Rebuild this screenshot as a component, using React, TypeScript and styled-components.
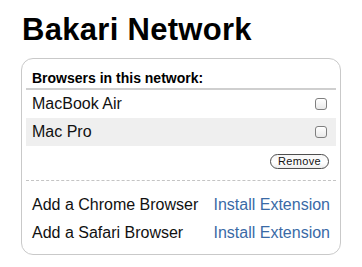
import React from 'react'
import styled, { createGlobalStyle } from 'styled-components'

const GlobalStyle = createGlobalStyle`
  html, body {
    margin: 0;
    padding: 0;
    background: #fff;
  }
  body {
    font-family: "Liberation Sans", Arial, Helvetica, sans-serif;
    color: #111;
  }
`

const Page = styled.main`
  padding: 14px 22px 0 21px;
  width: 320px;
`

const Title = styled.h1`
  margin: 0 0 12px 1px;
  font-size: 31px;
  line-height: 32px;
  font-weight: bold;
  letter-spacing: 0.3px;
  color: #000;
`

const Card = styled.section`
  border: 1px solid #c9c9c9;
  border-radius: 12px;
  padding: 0 4px 7px;
`

const Header = styled.h2`
  margin: 0;
  padding: 11px 6px 1px;
  font-size: 14px;
  line-height: 17px;
  font-weight: bold;
  color: #000;
  border-bottom: 2px solid #cfcfcf;
`

const Row = styled.div<{ $shaded?: boolean }>`
  display: flex;
  align-items: center;
  justify-content: space-between;
  height: 28px;
  padding: 0 9px 0 6px;
  font-size: 16px;
  line-height: 28px;
  background: ${({ $shaded }) => ($shaded ? '#efefef' : 'transparent')};
`

const Check = styled.span`
  display: block;
  width: 10px;
  height: 10px;
  border: 1px solid #7f7f7f;
  border-radius: 3px;
  background: linear-gradient(#ffffff, #e9e9e9);
  box-shadow: inset 0 1px 0 #fff;
`

const Actions = styled.div`
  display: flex;
  justify-content: flex-end;
  padding: 8px 7px 11px;
  border-bottom: 1px dashed #c4c4c4;
`

const PillButton = styled.button`
  height: 15px;
  width: 59px;
  padding: 0;
  border: 1px solid #4d4d4d;
  border-radius: 8px;
  background: linear-gradient(#f6f6f6, #ffffff 60%, #ececec);
  font-family: "Liberation Sans", Arial, sans-serif;
  font-size: 11px;
  line-height: 13px;
  letter-spacing: 0.3px;
  color: #111;
`

const Links = styled.div`
  padding-top: 10px;
`

const LinkRow = styled.div`
  display: flex;
  justify-content: space-between;
  height: 28px;
  padding: 0 6px;
  font-size: 16px;
  line-height: 28px;
`

const Link = styled.a`
  color: #3a6aa6;
  text-decoration: none;
`

const browsers = ['MacBook Air', 'Mac Pro']
const installs = ['Chrome', 'Safari']

const App: React.FC = () => (
  <Page>
    <GlobalStyle />
    <Title>Bakari Network</Title>
    <Card>
      <Header>Browsers in this network:</Header>
      {browsers.map((name, i) => (
        <Row key={name} $shaded={i % 2 === 1}>
          <span>{name}</span>
          <Check />
        </Row>
      ))}
      <Actions>
        <PillButton>Remove</PillButton>
      </Actions>
      <Links>
        {installs.map((name) => (
          <LinkRow key={name}>
            <span>Add a {name} Browser</span>
            <Link href="#">Install Extension</Link>
          </LinkRow>
        ))}
      </Links>
    </Card>
  </Page>
)

export default App
